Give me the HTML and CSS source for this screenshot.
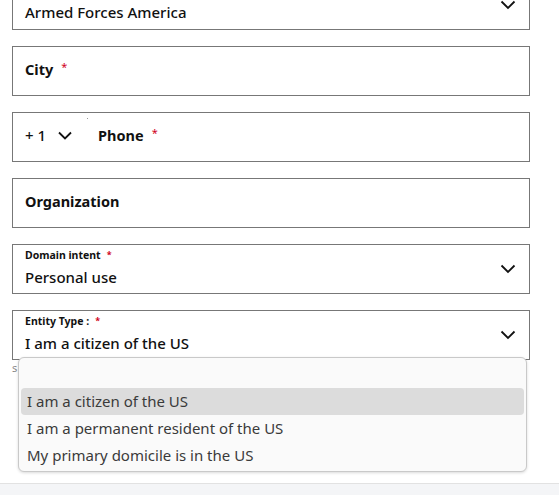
FILE: index.html
```html
<!DOCTYPE html>
<html>
<head>
<meta charset="utf-8">
<link rel="stylesheet" href="styles.css">
</head>
<body>
<div class="form">
  <div class="field select">
    <span class="value big">Armed Forces America</span>
    <svg class="chev" width="16" height="10" viewBox="0 0 16 10"><path d="M1.5 1.5 L8 8 L14.5 1.5" fill="none" stroke="#111" stroke-width="1.8"/></svg>
  </div>
  <div class="field plain">
    <span class="ph">City</span><span class="req">*</span>
  </div>
  <div class="field plain">
    <span class="code">+ 1</span>
    <svg class="chev small" width="14" height="9" viewBox="0 0 14 9"><path d="M1 1.5 L7 7.5 L13 1.5" fill="none" stroke="#111" stroke-width="1.8"/></svg>
    <span class="dot"></span>
    <span class="ph">Phone</span><span class="req">*</span>
  </div>
  <div class="field plain">
    <span class="ph">Organization</span>
  </div>
  <div class="field select stacked">
    <div class="col">
      <span class="lbl">Domain intent<span class="req sm">*</span></span>
      <span class="value">Personal use</span>
    </div>
    <svg class="chev" width="16" height="10" viewBox="0 0 16 10"><path d="M1.5 1.5 L8 8 L14.5 1.5" fill="none" stroke="#111" stroke-width="1.8"/></svg>
  </div>
  <div class="entity-wrap">
    <div class="field select stacked">
      <div class="col">
        <span class="lbl">Entity Type :<span class="req sm">*</span></span>
        <span class="value">I am a citizen of the US</span>
      </div>
      <svg class="chev" width="16" height="10" viewBox="0 0 16 10"><path d="M1.5 1.5 L8 8 L14.5 1.5" fill="none" stroke="#111" stroke-width="1.8"/></svg>
    </div>
    <div class="helper">s</div>
    <div class="menu">
      <div class="opt blank"></div>
      <div class="opt active">I am a citizen of the US</div>
      <div class="opt">I am a permanent resident of the US</div>
      <div class="opt">My primary domicile is in the US</div>
    </div>
  </div>
</div>
<div class="footer"></div>
</body>
</html>
```
FILE: styles.css
```css
html, body { margin: 0; padding: 0; background: #fff; }
body { width: 559px; height: 495px; overflow: hidden; font-family: "Noto Sans", "Liberation Sans", sans-serif; color: #111; }
.form { display: flex; flex-direction: column; gap: 16px; margin-top: -20px; padding-left: 12px; width: 518px; }
.field { box-sizing: border-box; height: 50px; border: 1px solid #777; display: flex; align-items: center; padding: 0 12px; }
.field.plain { padding-bottom: 4px; }
.field.select { justify-content: space-between; padding-right: 13px; }
.value { font-size: 15px; line-height: 20px; font-weight: 500; }
.big { padding-top: 14px; }
.ph { font-size: 14.5px; font-weight: 700; }
.req { color: #d0021b; font-size: 11px; margin-left: 8px; align-self: flex-start; margin-top: 12px; }
.req.sm { margin-left: 6px; margin-top: 0; font-size: 9px; vertical-align: top; }
.code { font-size: 15px; font-weight: 500; margin-right: 12px; }
.chev.small { margin-right: 15px; }
.dot { width: 1px; height: 1px; background: #999; margin-right: 10px; align-self: flex-start; margin-top: 5px; }
.col { display: flex; flex-direction: column; margin-top: -3px; }
.lbl { font-size: 10.5px; font-weight: 700; line-height: 14px; }
.stacked .value { line-height: 22px; margin-top: 4px; }
.entity-wrap { position: relative; }
.helper { font-size: 11px; color: #888; height: 16px; line-height: 16px; }
.menu { position: absolute; left: 6px; top: 47px; width: 509px; height: 115px; box-sizing: border-box; background: #fafafa; border: 1px solid #c9c9c9; border-radius: 6px; box-shadow: 0 1px 3px rgba(0,0,0,0.15); padding: 2px; font-family: "Noto Sans", "DejaVu Sans", sans-serif; font-size: 15px; color: #3a3a3a; }
.opt { height: 27px; line-height: 26px; padding-left: 6px; }
.opt.blank { height: 28px; }
.opt.active { background: #dcdcdc; border-radius: 4px; }
.footer { position: absolute; left: 0; top: 483px; width: 559px; height: 12px; background: #f4f5f7; border-top: 1px solid #e2e2e2; }
```
